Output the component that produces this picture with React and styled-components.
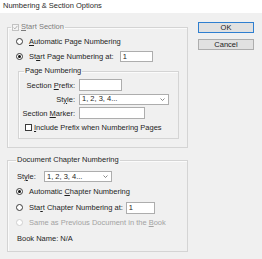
import React from 'react'
import styled, { createGlobalStyle } from 'styled-components'

const GlobalStyle = createGlobalStyle`
    html, body {
        margin: 0;
        padding: 0;
        background: #f0f0f0;
    }
    body {
        font-family: "Liberation Sans", Arial, sans-serif;
        font-size: 7.5px;
        color: #1e1e1e;
    }
    u {
        text-underline-offset: 1px;
    }
`

const Dialog = styled.div`
    width: 262px;
    height: 259px;
    background: #f0f0f0;
    overflow: hidden;
`

const TitleBar = styled.div`
    height: 13px;
    line-height: 12px;
    padding-left: 3px;
    background: #fff;
    color: #2a2a2a;
`

const Body = styled.div`
    display: flex;
    gap: 10px;
    padding: 7px 0 0 7px;
`

const LeftCol = styled.div`
    width: 181px;
    display: flex;
    flex-direction: column;
    gap: 5px;
`

const Group = styled.fieldset`
    margin: 0;
    padding: 0;
    min-width: 0;
    border: 1px solid #d4d4d4;
    box-shadow: inset 1px 1px 0 #fbfbfb;
`

const Legend = styled.legend`
    margin-left: ${p => p.$offset}px;
    padding: 0 1px;
    height: 14px;
    line-height: 14px;
    color: ${p => (p.$disabled ? '#7c7c7c' : '#1e1e1e')};

    .inner {
        display: inline-flex;
        align-items: center;
        gap: 2px;
    }
`

const GroupBody = styled.div`
    display: flex;
    flex-direction: column;
    padding: ${p => p.$pad};
`

const Row = styled.div`
    display: flex;
    align-items: center;
    height: ${p => p.$h || 15}px;
    margin-left: ${p => p.$indent || 0}px;
    margin-top: ${p => p.$mt || 0}px;
    gap: ${p => p.$gap || 6}px;
    color: ${p => (p.$disabled ? '#a3a3a3' : 'inherit')};
    white-space: nowrap;
`

const Radio = styled.span`
    width: 7px;
    height: 7px;
    box-sizing: border-box;
    border-radius: 50%;
    border: 1px solid ${p => (p.$disabled ? '#cfcfcf' : '#3a3a3a')};
    background: #fff;
    display: inline-flex;
    align-items: center;
    justify-content: center;
    flex: none;

    &::after {
        content: '';
        width: 3px;
        height: 3px;
        border-radius: 50%;
        background: ${p => (p.$checked ? '#111' : 'transparent')};
    }
`

const Check = styled.span`
    width: 7px;
    height: 7px;
    box-sizing: border-box;
    border: 1px solid ${p => (p.$disabled ? '#c2c2c2' : '#3a3a3a')};
    background: ${p => (p.$disabled ? '#f4f4f4' : '#fff')};
    display: inline-flex;
    align-items: center;
    justify-content: center;
    flex: none;
`

const Field = styled.div`
    box-sizing: border-box;
    width: ${p => p.$w}px;
    height: ${p => p.$h || 11}px;
    border: 1px solid #adadad;
    background: #fff;
    padding-left: 2px;
    display: flex;
    align-items: center;
    justify-content: space-between;
    padding-right: 3px;
    line-height: 1;
`

const InnerGroup = styled(Group)`
    margin-left: 10px;
    margin-top: 0;
`

const FormGrid = styled.div`
    display: grid;
    grid-template-columns: 56px auto;
    grid-auto-rows: 14px;
    column-gap: 4px;
    align-items: center;
    padding: 0 0 4px 0;
`

const FieldLabel = styled.span`
    text-align: right;
    white-space: nowrap;
`

const FullRow = styled.div`
    grid-column: 1 / -1;
    display: flex;
    align-items: center;
    gap: 2px;
    height: 15px;
    padding-left: 6px;
    margin-top: 1px;
`

const StyleLabel = styled.span`
    width: 21px;
    margin-left: 1px;
`

const PlainText = styled.span`
    margin-left: 1px;
`

const RightCol = styled.div`
    display: flex;
    flex-direction: column;
    gap: 6px;
    padding-top: 2px;
`

const Button = styled.div`
    box-sizing: border-box;
    width: 56px;
    height: 11px;
    line-height: 9px;
    text-align: center;
    background: #e1e1e1;
    border: 1px solid ${p => (p.$primary ? '#2f7fd0' : '#adadad')};
    color: #1a1a1a;
`

const Chevron = () => (
    <svg width="5" height="3" viewBox="0 0 5 3">
        <path d="M0.5 0.5 L2.5 2.5 L4.5 0.5" fill="none" stroke="#6b6b6b" strokeWidth="0.8" />
    </svg>
)

const Tick = () => (
    <svg width="5" height="5" viewBox="0 0 5 5">
        <path d="M0.6 2.6 L1.9 3.9 L4.4 0.9" fill="none" stroke="#a8a8a8" strokeWidth="0.9" />
    </svg>
)

function App() {
    return (
        <>
            <GlobalStyle />
            <Dialog>
                <TitleBar>Numbering &amp; Section Options</TitleBar>
                <Body>
                    <LeftCol>
                        <Group>
                            <Legend $offset={3} $disabled>
                                <span className="inner">
                                    <Check $disabled><Tick /></Check>
                                    <span><u>S</u>tart Section</span>
                                </span>
                            </Legend>
                            <GroupBody $pad="0 8px 8px 0">
                                <Row $indent={8}>
                                    <Radio />
                                    <span><u>A</u>utomatic Page Numbering</span>
                                </Row>
                                <Row $indent={8}>
                                    <Radio $checked />
                                    <span>St<u>a</u>rt Page Numbering at:</span>
                                    <Field $w={33} style={{ marginLeft: 0 }}>1</Field>
                                </Row>
                                <InnerGroup>
                                    <Legend $offset={5}>Page Numbering</Legend>
                                    <FormGrid>
                                        <FieldLabel>Section <u>P</u>refix:</FieldLabel>
                                        <Field $w={43} $h={12} />
                                        <FieldLabel>St<u>y</u>le:</FieldLabel>
                                        <Field $w={90} $h={11}>
                                            <span>1, 2, 3, 4...</span>
                                            <Chevron />
                                        </Field>
                                        <FieldLabel>Section <u>M</u>arker:</FieldLabel>
                                        <Field $w={66} $h={12} />
                                        <FullRow>
                                            <Check />
                                            <span><u>I</u>nclude Prefix when Numbering Pages</span>
                                        </FullRow>
                                    </FormGrid>
                                </InnerGroup>
                            </GroupBody>
                        </Group>

                        <Group>
                            <Legend $offset={8}>Document Chapter Numbering</Legend>
                            <GroupBody $pad="2px 0 5px 8px">
                                <Row $gap={0}>
                                    <StyleLabel>St<u>y</u>le:</StyleLabel>
                                    <Field $w={68} $h={11}>
                                        <span>1, 2, 3, 4...</span>
                                        <Chevron />
                                    </Field>
                                </Row>
                                <Row>
                                    <Radio $checked />
                                    <span>Automatic <u>C</u>hapter Numbering</span>
                                </Row>
                                <Row $mt={1}>
                                    <Radio />
                                    <span>Sta<u>r</u>t Chapter Numbering at:</span>
                                    <Field $w={29} $h={12} style={{ marginLeft: -3 }}>1</Field>
                                </Row>
                                <Row $disabled>
                                    <Radio $disabled />
                                    <span>Same as Previous Document in the <u>B</u>ook</span>
                                </Row>
                                <Row $mt={1}>
                                    <PlainText>Book Name: N/A</PlainText>
                                </Row>
                            </GroupBody>
                        </Group>
                    </LeftCol>

                    <RightCol>
                        <Button $primary>OK</Button>
                        <Button>Cancel</Button>
                    </RightCol>
                </Body>
            </Dialog>
        </>
    )
}

export default App
